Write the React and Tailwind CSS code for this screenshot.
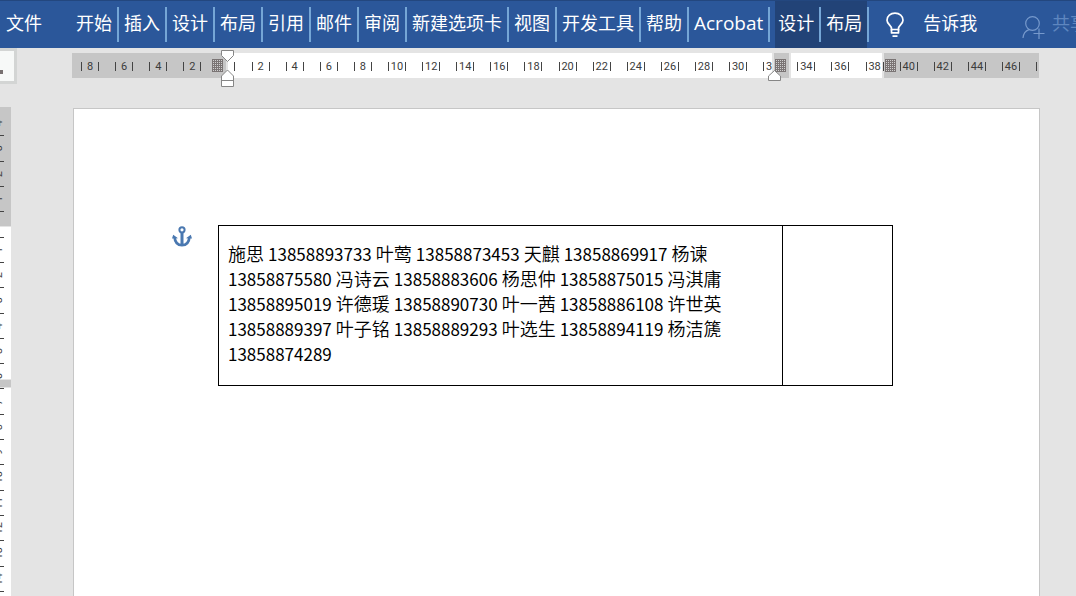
import React from "react";

const UI_FONT = "font-['Open_Sans','Noto_Sans_CJK_SC',sans-serif]";

const TABS = ["开始", "插入", "设计", "布局", "引用", "邮件", "审阅", "新建选项卡", "视图", "开发工具", "帮助"];

const CONTACTS = [
  ["施思", "13858893733"],
  ["叶莺", "13858873453"],
  ["天麒", "13858869917"],
  ["杨谏", "13858875580"],
  ["冯诗云", "13858883606"],
  ["杨思仲", "13858875015"],
  ["冯淇庸", "13858895019"],
  ["许德瑗", "13858890730"],
  ["叶一茜", "13858886108"],
  ["许世英", "13858889397"],
  ["叶子铭", "13858889293"],
  ["叶选生", "13858894119"],
  ["杨洁篪", "13858874289"],
];

const COLUMN_MARKS = Array.from({ length: 28 }, (_, i) => Math.abs(i * 2 - 8));
const ROW_MARKS = Array.from({ length: 19 }, (_, i) => Math.abs(i - 4));

function Separator() {
  return <span aria-hidden="true" className="h-[35px] w-0.5 shrink-0 bg-[#75a6d6]" />;
}

function Tab({ children, className = "px-[5px]" }) {
  return (
    <button type="button" className={`flex h-full shrink-0 items-center whitespace-nowrap pb-0.5 ${className}`}>
      {children}
    </button>
  );
}

function Bulb() {
  return (
    <svg width="20" height="26" viewBox="0 0 20 26" fill="none" stroke="white" strokeWidth="1.7" aria-hidden="true">
      <path d="M6.5 18.5V16.5C6.5 13.5 2 12 2 8.2C2 4 5.5 1.2 10 1.2S18 4 18 8.2C18 12 13.5 13.5 13.5 16.5V18.5" />
      <path d="M5.8 17.5H14.2M5.8 20.8H14.2M6.5 17V21M13.5 17V21M7.5 24.2H12.5" />
    </svg>
  );
}

function PersonPlus() {
  return (
    <svg width="23" height="24" viewBox="0 0 23 24" fill="none" stroke="#7699cc" strokeWidth="1.2" aria-hidden="true">
      <circle cx="10.5" cy="7.5" r="6.8" />
      <path d="M1 22C1.3 18 3.5 14.8 7 13.6M17 12.5V23M11.5 17.5H22.5" />
    </svg>
  );
}

function Ribbon() {
  return (
    <header className={`flex h-12 w-full shrink-0 items-center overflow-hidden border-t border-[#23477f] bg-[#2b579a] text-[18px] text-white ${UI_FONT}`}>
      <button type="button" className="flex h-full w-[71px] shrink-0 items-center pb-0.5 pl-1.5">文件</button>
      <nav className="flex h-full items-center">
        {TABS.map((t) => (
          <React.Fragment key={t}>
            <Tab>{t}</Tab>
            <Separator />
          </React.Fragment>
        ))}
        <Tab className="px-[5px] text-[19px]">Acrobat</Tab>
        <Separator />
        <div className="ml-[5px] flex h-full items-center bg-[#224377]">
          <Tab className="pl-[3px] pr-[5px]">设计</Tab>
          <Separator />
          <Tab>布局</Tab>
        </div>
        <Separator />
      </nav>
      <button type="button" className="ml-4 flex shrink-0 items-center gap-[18px]">
        <Bulb />
        <span className="pb-0.5">告诉我</span>
      </button>
      <div className="min-w-4 flex-1" />
      <button type="button" className="-mr-3 flex shrink-0 items-center gap-[7px] text-[#5e86bf]">
        <span className="pt-1.5"><PersonPlus /></span>
        <span className="pb-0.5">共享</span>
      </button>
    </header>
  );
}

function ColumnHandle() {
  return (
    <svg width="11" height="13" aria-hidden="true">
      <rect width="11" height="13" fill="#7a7474" />
      {Array.from({ length: 30 }, (_, i) => (
        <rect key={i} x={1 + (i % 5) * 2} y={1 + Math.floor(i / 5) * 2} width="1" height="1" fill="#cfcfcf" />
      ))}
    </svg>
  );
}

function Tick() {
  return <span className="h-[9px] w-px bg-[#444]" />;
}

function HorizontalRuler() {
  return (
    <div className="relative ml-[55px] mr-[37px] mt-[5px] h-[25px] flex-1">
      <div className="flex h-full gap-0.5">
        <div className="w-[154px] bg-[#c6c6c6]" />
        <div className="flex-1 bg-white" />
        <div className="w-[15px] bg-[#c6c6c6]" />
        <div className="w-[91px] bg-white" />
        <div className="w-[155px] bg-[#c6c6c6]" />
      </div>
      <div className="absolute inset-0 flex items-center pl-px pt-0.5 font-['Roboto',sans-serif] text-[11px] leading-[13px] text-[#3c3c3c]">
        {COLUMN_MARKS.map((n, i) => (
          <div key={i} className="flex min-w-0 flex-1 items-center justify-center">
            <Tick />
            <span className="w-4 text-center">{n || ""}</span>
            <Tick />
          </div>
        ))}
        <div className="flex w-[11px] pl-2"><Tick /></div>
      </div>
      <div className="absolute left-[140px] top-1.5"><ColumnHandle /></div>
      <div className="absolute right-[250px] top-0 h-full w-[17px] border-l-2 border-[#e4e4e4] bg-[#c6c6c6] pl-px pt-1.5"><ColumnHandle /></div>
      <div className="absolute right-[143px] top-1.5"><ColumnHandle /></div>
      <svg className="absolute -top-[3px] left-[149px]" width="13" height="37" fill="white" stroke="#868686" aria-hidden="true">
        <path d="M.5 .5H12.5V5.5L6.5 11.5L.5 5.5Z" />
        <path d="M.5 36.5V26L6.5 20L12.5 26V36.5ZM.5 30.5H12.5" />
      </svg>
      <svg className="absolute right-[258px] top-[17px]" width="13" height="11" fill="white" stroke="#868686" aria-hidden="true">
        <path d="M.5 10.5V6L6.5 .5L12.5 6V10.5Z" />
      </svg>
    </div>
  );
}

function VerticalRuler() {
  return (
    <div className="relative w-[11px] shrink-0 overflow-hidden">
      <div className="flex h-full flex-col">
        <div className="h-[119px] shrink-0 bg-[#c6c6c6]" />
        <div className="mt-px h-[152px] shrink-0 bg-white" />
        <div className="my-px h-[7px] shrink-0 bg-[#c6c6c6]" />
        <div className="flex-1 bg-white" />
      </div>
      <div className="absolute left-0 top-1 flex h-[481px] flex-col font-['Roboto',sans-serif] text-[11px] leading-[10px] text-[#3c3c3c]">
        {ROW_MARKS.map((n, i) => (
          <div key={i} className="flex w-1 flex-1 items-center justify-end border-b border-[#444]">
            <span className="rotate-180 [writing-mode:vertical-rl]">{n || ""}</span>
          </div>
        ))}
      </div>
    </div>
  );
}

function Anchor() {
  return (
    <svg width="20" height="22" viewBox="0 0 20 22" fill="none" stroke="#4a78b0" aria-hidden="true">
      <circle cx="10" cy="3.8" r="2.6" strokeWidth="2" />
      <path d="M10 6V19" strokeWidth="3" />
      <path d="M2.6 11C3 16.5 6 19.2 10 19.2S17 16.5 17.4 11" strokeWidth="2.8" />
      <path d="M0 12.5L1.2 8.8L6 12.3ZM20 12.5L18.8 8.8L14 12.3Z" fill="#4a78b0" stroke="none" />
    </svg>
  );
}

function DocumentPage() {
  return (
    <main className="ml-[62px] mr-9 mt-px flex flex-1 items-start border border-b-0 border-[#c6c6c6] bg-white pl-[98px] pt-[116px]">
      <div className="mr-[26px] pt-px"><Anchor /></div>
      <table className="border-collapse border border-black font-['Noto_Sans_CJK_SC',sans-serif] text-[18px] font-[350] leading-[25px] text-black">
        <tbody>
          <tr>
            <td className="h-[160px] w-[564px] border border-black px-[9px] pb-1 align-middle">
              {CONTACTS.map(([name, phone]) => (
                <React.Fragment key={phone}>
                  <span className="whitespace-nowrap">{name}</span>{" "}
                  <span className="text-[17px] font-normal">{phone}</span>{" "}
                </React.Fragment>
              ))}
            </td>
            <td className="w-[110px] border border-black" />
          </tr>
        </tbody>
      </table>
    </main>
  );
}

export default function App() {
  return (
    <div className="flex h-screen flex-col overflow-hidden bg-[#e4e4e4]">
      <Ribbon />
      <div className="flex h-[59px] shrink-0 items-start">
        <button type="button" aria-label="制表符" className="flex h-9 w-[17px] shrink-0 items-center border-y-[3px] border-r-[3px] border-[#d3d5d4] bg-[#f7f9f8] pt-3">
          <span className="h-1 w-[3px] bg-[#777070]" />
        </button>
        <HorizontalRuler />
      </div>
      <div className="flex min-h-0 flex-1">
        <VerticalRuler />
        <DocumentPage />
      </div>
    </div>
  );
}
